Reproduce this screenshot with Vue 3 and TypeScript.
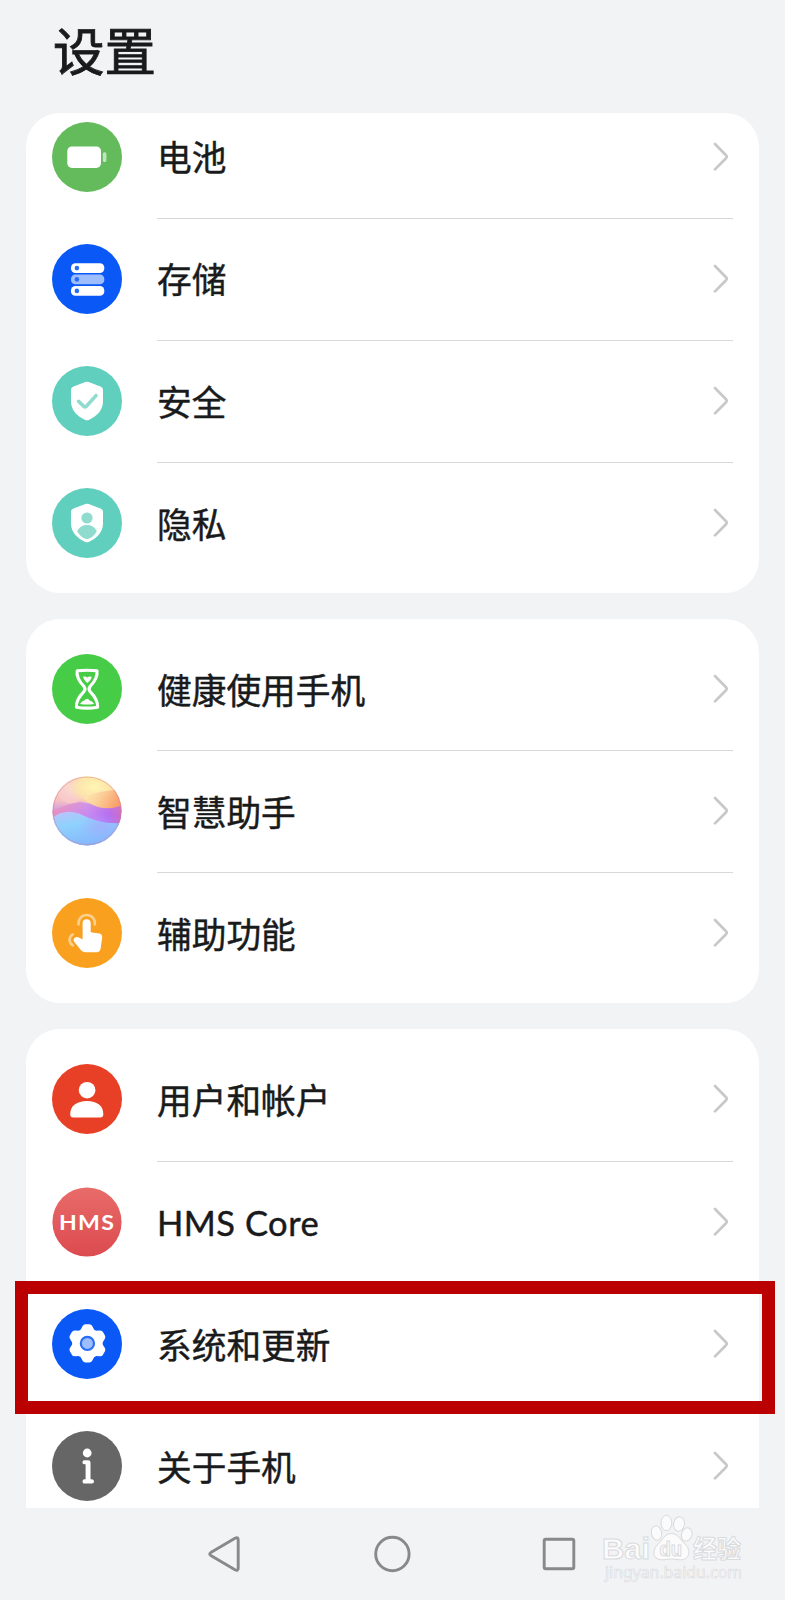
<script setup lang="ts">
interface Item {
  icon: string
  color: string
  label: string
  latin?: boolean
  plain?: boolean
}

const groups: { name: string; items: Item[] }[] = [
  {
    name: 'first',
    items: [
      { icon: 'battery', color: '#64bb5c', label: '电池' },
      { icon: 'storage', color: '#0a59f7', label: '存储' },
      { icon: 'security', color: '#61cfbe', label: '安全' },
      { icon: 'privacy', color: '#61cfbe', label: '隐私' },
    ],
  },
  {
    name: 'second',
    items: [
      { icon: 'balance', color: '#47cc47', label: '健康使用手机' },
      { icon: 'assistant', color: 'url(#orbBase)', label: '智慧助手' },
      { icon: 'access', color: '#f9a01e', label: '辅助功能' },
    ],
  },
  {
    name: 'third',
    items: [
      { icon: 'user', color: '#e84026', label: '用户和帐户' },
      { icon: 'hms', color: 'url(#hmsBase)', label: 'HMS Core', latin: true, plain: true },
      { icon: 'system', color: '#0a59f7', label: '系统和更新', plain: true },
      { icon: 'about', color: '#666666', label: '关于手机' },
    ],
  },
]
</script>

<template>
  <div class="screen">
    <h1 class="title">设置</h1>
    <main class="list">
      <section v-for="g in groups" :key="g.name" class="card" :class="g.name">
        <div v-for="(it, i) in g.items" :key="it.label" class="row">
          <svg class="icon" viewBox="0 0 70 70">
            <defs v-if="it.icon === 'assistant'">
              <linearGradient id="orbBase" x1="0" y1="0" x2="0" y2="1">
                <stop offset="0" stop-color="#fbe3a0" />
                <stop offset=".35" stop-color="#f5c0c0" />
                <stop offset=".55" stop-color="#c58bf0" />
                <stop offset="1" stop-color="#7fa8fb" />
              </linearGradient>
              <linearGradient id="orbPink" x1="0" y1="0" x2="1" y2="0">
                <stop offset="0" stop-color="#f08fb0" />
                <stop offset=".5" stop-color="#c98af0" />
                <stop offset=".8" stop-color="#b065f2" />
                <stop offset="1" stop-color="#cf62b4" />
              </linearGradient>
              <linearGradient id="orbOrange" x1="0" y1="0" x2="1" y2=".3">
                <stop offset="0" stop-color="#fdeeb8" />
                <stop offset=".5" stop-color="#fcd09a" />
                <stop offset="1" stop-color="#f9a26c" />
              </linearGradient>
              <linearGradient id="orbBlue" x1=".2" y1="0" x2=".6" y2="1">
                <stop offset="0" stop-color="#b8c4fb" />
                <stop offset=".35" stop-color="#8ed2fd" />
                <stop offset="1" stop-color="#84b4fc" />
              </linearGradient>
              <radialGradient id="orbRose" cx=".5" cy=".5" r=".5">
                <stop offset="0" stop-color="#fadadb" />
                <stop offset="1" stop-color="#f9c8ca" />
              </radialGradient>
              <radialGradient id="orbGlow" cx=".5" cy=".5" r=".5">
                <stop offset="0" stop-color="#fff6b4" />
                <stop offset=".6" stop-color="#fdeaa8" stop-opacity=".8" />
                <stop offset="1" stop-color="#fde0a8" stop-opacity="0" />
              </radialGradient>
              <radialGradient id="orbViolet" cx=".5" cy=".5" r=".5">
                <stop offset="0" stop-color="#b49afb" stop-opacity=".5" />
                <stop offset="1" stop-color="#b49afb" stop-opacity="0" />
              </radialGradient>
              <clipPath id="orbClip"><circle cx="35" cy="34.8" r="34.6" /></clipPath>
            </defs>
            <defs v-if="it.icon === 'hms'">
              <linearGradient id="hmsBase" x1="0" y1="0" x2="0" y2="1">
                <stop offset="0" stop-color="#e86c69" />
                <stop offset="1" stop-color="#dc4a50" />
              </linearGradient>
            </defs>
            <circle v-if="it.icon !== 'assistant'" cx="35" cy="35" :r="it.icon === 'hms' ? 34.6 : 35" :fill="it.color" />

            <g v-if="it.icon === 'battery'" fill="#fff">
              <rect x="15.3" y="24.5" width="33.7" height="21.4" rx="4.6" />
              <rect x="50.8" y="30.2" width="3.6" height="9.8" rx="1.5" opacity=".6" />
            </g>

            <g v-else-if="it.icon === 'storage'">
              <rect x="19" y="19.2" width="33.3" height="9.8" rx="4.4" fill="#fff" />
              <rect x="19" y="30.5" width="33.3" height="9.8" rx="4.4" fill="#9dbdfc" />
              <rect x="19" y="42" width="33.3" height="9.8" rx="4.4" fill="#fff" />
              <circle v-for="y in [24.1, 35.4, 46.9]" :key="y" cx="24.9" :cy="y" r="2.3" fill="#2a6df5" />
            </g>

            <g v-else-if="it.icon === 'security' || it.icon === 'privacy'">
              <path d="M33.3 16.1Q35 15.4 36.7 16.1L49 20.7Q51 21.5 51 23.6V35.5C51 44.5 44 50.8 36.8 53.9Q35 54.6 33.2 53.9C26 50.8 19 44.5 19 35.5V23.6Q19 21.5 21 20.7Z" fill="#fff" />
              <path v-if="it.icon === 'security'" d="M26.6 35.3L31.8 40.3Q33.1 41.4 34.4 40.2L44 29.6" fill="none" stroke="#8fdccf" stroke-width="3.6" stroke-linecap="round" />
              <g v-else fill="#8fdccf">
                <circle cx="35" cy="30" r="5.6" />
                <path d="M25.2 43.3C27.2 38.8 31 37 35 37S42.8 38.8 44.8 43.3C42.8 47.4 38.9 50.4 35 51.2C31.1 50.4 27.2 47.4 25.2 43.3Z" />
              </g>
            </g>

            <g v-else-if="it.icon === 'balance'" fill="none" stroke="#fff">
              <path d="M25.2 16.8Q35 15.8 45 16.8Q46 24.2 38.1 32.4Q36 35 38.1 37.6Q46 45.5 45.6 53.2Q35 55 24.4 53.2Q24 45.5 31.9 37.6Q34 35 31.9 32.4Q24 24.2 25.2 16.8Z" stroke-width="3.1" stroke-linejoin="round" />
              <path d="M31.2 22.6Q34 22 35.2 23.6Q37.4 22 39.6 22.8Q39.7 25.6 35.4 29Q31.4 26 31.2 22.6Z" fill="#fff" stroke="none" />
              <path d="M28 49.9Q29.5 47.4 32.2 46.6Q35.5 42.8 37.6 46.6Q40.8 47.4 42.2 49.9Q35 51 28 49.9Z" fill="#fff" stroke="none" />
            </g>

            <g v-else-if="it.icon === 'assistant'" clip-path="url(#orbClip)">
              <rect width="70" height="70" :fill="it.color" />
              <circle cx="19" cy="13" r="14.5" fill="url(#orbRose)" opacity=".8" />
              <ellipse cx="42" cy="11" rx="27" ry="18" fill="url(#orbGlow)" />
              <path d="M0 35Q15 28 28 26Q46 30 70 27V50H0Z" fill="url(#orbPink)" opacity=".75" />
              <path d="M31 21.5Q48 13.5 70 14V29.5Q57 34 46 31Q37 28.5 31 21.5Z" fill="url(#orbOrange)" />
              <path d="M0 42Q12 32.5 27 37.5Q49 49 70 47V70H0Z" fill="url(#orbBlue)" />
              <ellipse cx="48" cy="50" rx="22" ry="14" fill="url(#orbViolet)" />
              <circle cx="35" cy="34.8" r="33.8" fill="none" stroke="#d8799e" stroke-width="1" opacity=".45" />
            </g>

            <g v-else-if="it.icon === 'access'">
              <path d="M26.6 26.5A8.2 8.2 0 1 1 42.8 26.5" fill="none" stroke="#fccf8e" stroke-width="2.6" stroke-linecap="round" />
              <path d="M20.8 36.3A6.4 6.4 0 0 0 20.8 47.4" fill="none" stroke="#fccf8e" stroke-width="2.6" stroke-linecap="round" />
              <path d="M30.6 24.8Q30.8 21.3 34.6 21.3T38.7 24.8V34.3L47.4 35.5Q50.3 36 50.2 39.2L48.7 50.2Q48.1 54.3 44.5 54.3H33.5Q30.8 54.3 29 52.3L22.4 43.9Q20.6 41.2 22.9 39.7Q24.8 38.5 27.4 39.8L30.6 41.5Z" fill="#fff" />
            </g>

            <g v-else-if="it.icon === 'user'" fill="#fff">
              <circle cx="35.1" cy="26.2" r="8.3" />
              <path d="M18.2 50C18.2 42 25 37 35 37S51.3 42 51.3 50Q51.3 53.5 48.2 53.5H21.3Q18.2 53.5 18.2 50Z" />
            </g>

            <g v-else-if="it.icon === 'hms'" transform="translate(7 42.6) scale(1.1 1)">
              <text class="hms" x="0" y="0">HMS</text>
            </g>

            <g v-else-if="it.icon === 'system'">
              <g fill="#fff" stroke="#fff" stroke-linejoin="round">
                <circle cx="35.4" cy="34.4" r="15.2" stroke="none" />
                <path v-for="a in [0, 60, 120, 180, 240, 300]" :key="a" :transform="`rotate(${a} 35.4 34.4)`" d="M29.2 22L31.6 17.5Q32.2 16.4 33.4 16.4H37.4Q38.6 16.4 39.2 17.5L41.6 22Z" stroke-width="2.2" />
              </g>
              <circle cx="35.4" cy="34.4" r="6.6" fill="#9dbdfc" stroke="#2a6df5" stroke-width="2.2" />
            </g>

            <g v-else-if="it.icon === 'about'" fill="#fff">
              <circle cx="35.2" cy="22" r="4.4" />
              <path d="M32.3 29.2H36.2Q38.5 29.2 38.5 31.5V48.2H40Q42 48.5 42 50.4T40 52.6H32.5Q30.5 52.6 30.5 50.4T32.5 48.2H33.6V33.2H32.3Q30.4 33 30.4 31.2T32.3 29.2Z" />
            </g>
          </svg>
          <div class="body" :class="{ last: i === g.items.length - 1 || it.plain }">
            <span class="label" :class="{ latin: it.latin }">{{ it.label }}</span>
            <svg class="chevron" viewBox="0 0 16 30">
              <path d="M2 2L13 13.2Q14.4 14.7 13 16.2L2 27.4" fill="none" stroke="#c8c8c8" stroke-width="2.7" stroke-linecap="round" />
            </svg>
          </div>
        </div>
      </section>
    </main>

    <div class="highlight"></div>

    <nav class="nav">
      <svg viewBox="0 0 785 92">
        <g fill="none" stroke="#88898a" stroke-width="2.9" stroke-linejoin="round">
          <path d="M210.8 44.6L235 30.2Q238.2 28.7 238.2 31.8V60.2Q238.2 63.3 235 61.8L210.8 47.4Q208.7 46 210.8 44.6Z" />
          <circle cx="392.4" cy="46" r="16.7" />
          <rect x="544.2" y="31.2" width="29.6" height="29.6" rx="1.5" />
        </g>
      </svg>
    </nav>

    <svg class="watermark" viewBox="0 0 160 80">
      <g fill="#fbfbfc" stroke="#d9dadc" stroke-width="1">
        <text class="wm-main" x="15" y="48" textLength="48" lengthAdjust="spacingAndGlyphs">Bai</text>
        <ellipse cx="69.5" cy="22" rx="5.2" ry="7.2" transform="rotate(-10 69.5 22)" />
        <ellipse cx="79.4" cy="12" rx="5.4" ry="7.6" />
        <ellipse cx="92" cy="13" rx="5.4" ry="7.4" transform="rotate(8 92 13)" />
        <ellipse cx="99.7" cy="23.5" rx="5.2" ry="6.8" transform="rotate(18 99.7 23.5)" />
        <path d="M84.5 22.5C91.5 22.5 93.5 29.5 98 33C105 39.5 102 49 93.5 48.8C89.5 48.8 88.5 48 84.5 48S78.5 49 74.5 48.8C65.5 48.5 64.5 39.5 71 33C75.5 29.5 77.5 22.5 84.5 22.5Z" />
        <text class="wm-du" x="72.5" y="45" textLength="22.5" lengthAdjust="spacingAndGlyphs">du</text>
        <text class="wm-cn" x="106" y="46.5" textLength="48" lengthAdjust="spacingAndGlyphs">经验</text>
        <text class="wm-url" x="18" y="66.5" textLength="137" lengthAdjust="spacingAndGlyphs">jingyan.baidu.com</text>
      </g>
    </svg>
  </div>
</template>

<style>
html,
body {
  margin: 0;
  background: #f1f3f5;
}
</style>

<style scoped>
.screen {
  position: relative;
  width: 785px;
  height: 1600px;
  overflow: hidden;
  display: flex;
  flex-direction: column;
  background: #f1f3f5;
  color: #191a1b;
  font-family: 'Noto Sans CJK SC', sans-serif;
}
.title {
  flex: none;
  box-sizing: border-box;
  height: 113px;
  margin: 0;
  padding: 12px 0 0 53px;
  font-size: 51.5px;
  line-height: 74px;
  font-weight: 400;
  -webkit-text-stroke: 0.9px #191a1b;
}
.list {
  flex: none;
  height: 1395px;
  overflow: hidden;
  padding: 0 26px;
}
.card {
  box-sizing: border-box;
  background: #fff;
  border-radius: 34px;
  overflow: hidden;
  padding: 8.8px 26px;
  margin-bottom: 26px;
}
.first {
  padding-top: 0;
  height: 480px;
}
.first .row:first-child {
  margin-top: -17.6px;
}
.second {
  height: 384.4px;
  padding-top: 9px;
}
.third {
  height: 520px;
  margin-bottom: 0;
  padding-top: 9px;
}
.row {
  display: flex;
  height: 122.2px;
  align-items: center;
}
.icon {
  flex: none;
  width: 70px;
  height: 70px;
  margin-right: 35px;
}
.body {
  flex: 1;
  height: calc(100% + 1px);
  margin-bottom: -1px;
  box-sizing: border-box;
  display: flex;
  align-items: center;
  justify-content: space-between;
  border-bottom: 1px solid #d8d8d9;
  padding-right: 4.5px;
}
.body.last {
  border-bottom-color: transparent;
}
.label {
  font-size: 34.7px;
  line-height: 50px;
  -webkit-text-stroke: 0.45px #191a1b;
  position: relative;
  top: -0.3px;
}
.latin {
  font-family: Lato, sans-serif;
  font-size: 34.5px;
  letter-spacing: 0.5px;
  top: 1px;
}
.chevron {
  width: 16px;
  height: 30px;
}
.hms {
  font-family: Lato, sans-serif;
  font-weight: 700;
  font-size: 21px;
  letter-spacing: 1.2px;
  fill: #fff;
}
.highlight {
  position: absolute;
  box-sizing: border-box;
  left: 15px;
  top: 1281px;
  width: 760px;
  height: 133px;
  border: 13px solid #ba0000;
}
.nav {
  height: 92px;
}
.nav svg {
  display: block;
  width: 785px;
  height: 92px;
}
.watermark {
  position: absolute;
  left: 587px;
  top: 1511px;
  width: 160px;
  height: 80px;
  overflow: visible;
}
.wm-main {
  font: bold 30px 'Liberation Sans', sans-serif;
}
.wm-du {
  font: bold 20px 'Liberation Sans', sans-serif;
}
.wm-cn {
  font: bold 25px 'Noto Sans CJK SC', sans-serif;
}
.wm-url {
  font: 15.5px 'Noto Sans', sans-serif;
  stroke-width: 0.6px;
}
</style>
